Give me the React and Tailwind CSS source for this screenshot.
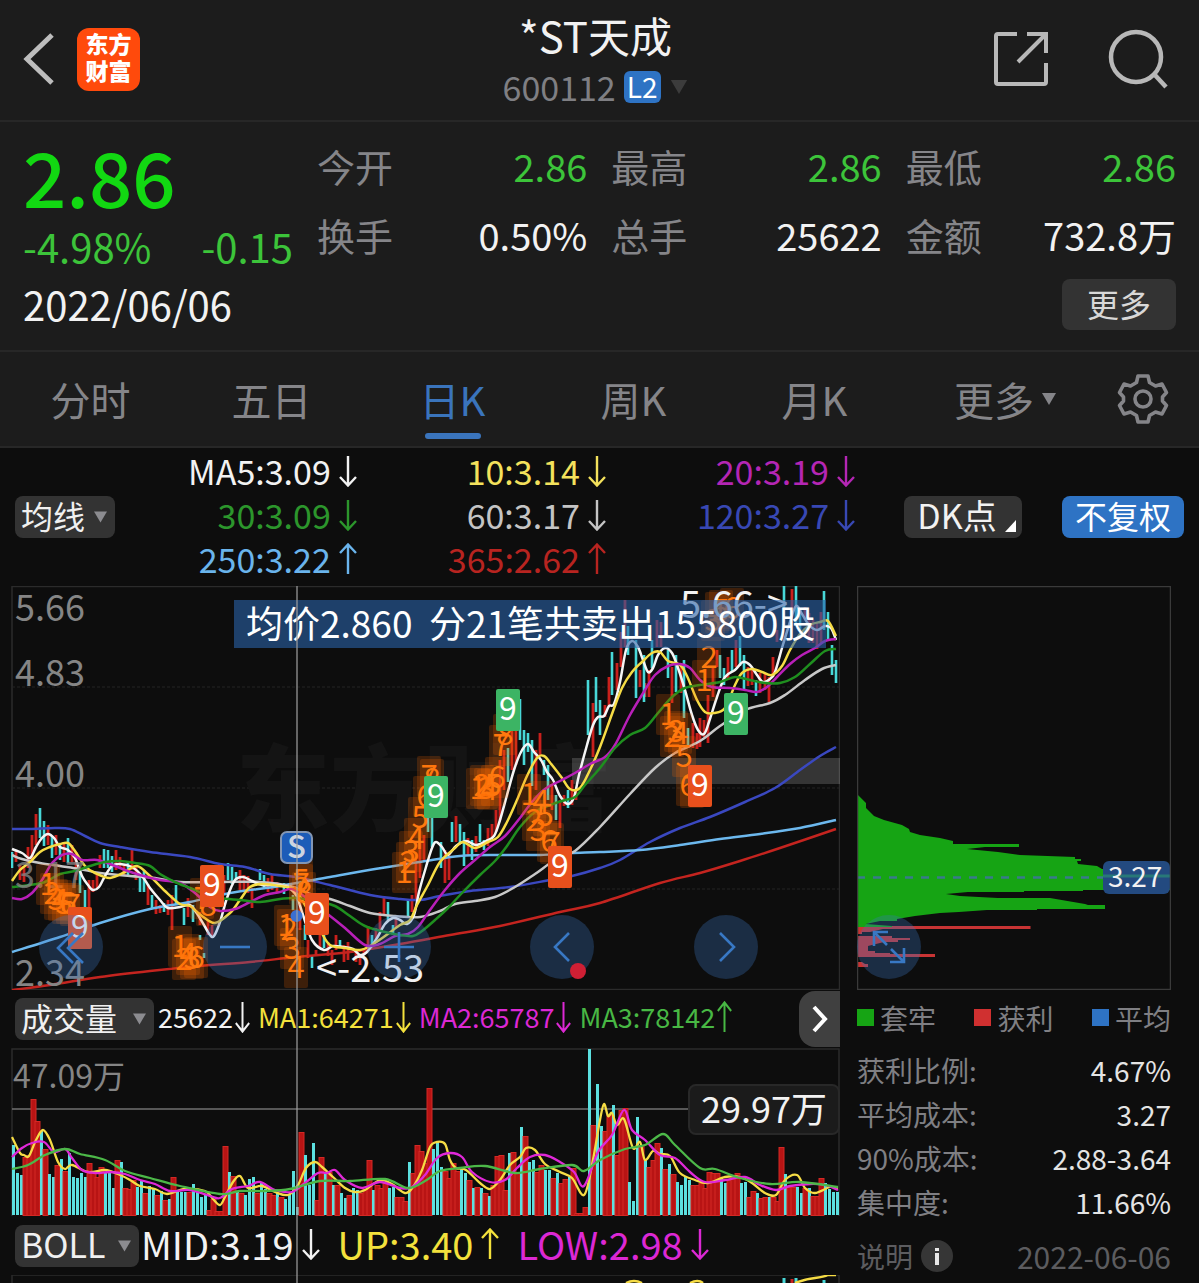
import React, { useState } from 'react';

const quotes = [
  { label: '今开', value: '2.86', up: false },
  { label: '最高', value: '2.86', up: false },
  { label: '最低', value: '2.86', up: false },
  { label: '换手', value: '0.50%' },
  { label: '总手', value: '25622' },
  { label: '金额', value: '732.8万' }
];

const tabs = ['分时', '五日', '日K', '周K', '月K'];

const averages = [
  { text: 'MA5:3.09', dir: 'down', color: 'text-[#f2f2f2]' },
  { text: '10:3.14', dir: 'down', color: 'text-[#f3e15c]' },
  { text: '20:3.19', dir: 'down', color: 'text-[#b426b4]' },
  { text: '30:3.09', dir: 'down', color: 'text-[#2c962c]' },
  { text: '60:3.17', dir: 'down', color: 'text-[#c4c4c4]' },
  { text: '120:3.27', dir: 'down', color: 'text-[#3848b4]' },
  { text: '250:3.22', dir: 'up', color: 'text-[#6ab4ec]' },
  { text: '365:2.62', dir: 'up', color: 'text-[#b82420]' }
];

const costs = [
  { label: '获利比例:', value: '4.67%' },
  { label: '平均成本:', value: '3.27' },
  { label: '90%成本:', value: '2.88-3.64' },
  { label: '集中度:', value: '11.66%' }
];

// "x,y x,y ..." point lists
const priceLines = [
  { color: '#3a48c0', points: '12,829 30,829 55,828 70,829 85,836 100,843 120,847 150,852 190,857 220,864 245,867 270,874 296,877 330,885 370,895 400,899 420,900 440,896 470,891 510,887 550,880 572,876 600,868 620,860 650,842 680,828 710,817 745,802 775,788 800,770 820,756 836,747' },
  { color: '#6cb8ee', points: '12,952 60,937 100,923 150,909 190,902 230,893 280,886 330,877 375,869 420,862 460,856 500,855 540,855 570,853 600,852 640,850 680,845 720,839 760,834 800,828 836,820' },
  { color: '#c4241f', points: '12,990 50,985 100,977 150,971 200,966 250,962 296,957 350,952 400,944 450,935 500,926 560,912 600,903 660,883 700,873 740,861 780,848 836,829' },
  { color: '#c8c8c8', points: '12,855 22,859 40,863 60,866 80,869 100,873 130,876 155,878 180,882 220,882 260,882 290,886 310,894 330,899 350,906 370,913 395,916 420,917 440,911 455,904 475,901 495,897 515,887 535,874 555,860 575,851 600,827 630,794 655,768 675,753 700,741 720,726 745,710 770,703 785,695 805,680 822,669 836,665' },
  { color: '#f5f5f5', points: '12,849 22,853 30,858 36,847 42,838 48,834 54,838 60,847 68,850 75,858 82,876 88,885 93,890 99,887 105,876 112,866 120,864 132,867 142,876 150,888 160,900 168,908 180,907 190,905 196,912 204,925 210,935 214,936 220,922 227,898 235,880 243,877 252,881 262,885 275,885 287,887 296,895 303,915 312,940 324,950 333,946 343,947 353,949 360,955 367,952 377,938 385,924 393,918 400,920 407,924 414,915 419,892 426,867 432,848 436,842 442,847 448,855 456,846 466,841 476,845 486,841 494,836 500,820 507,795 514,770 521,752 528,744 534,752 541,760 547,772 553,780 560,796 568,804 574,797 579,775 587,745 593,725 598,717 604,716 609,706 614,704 620,682 626,650 632,641 638,647 643,660 648,672 653,668 658,655 665,648 672,653 678,668 685,690 692,715 698,730 704,734 709,722 717,697 725,677 735,670 743,662 750,665 757,675 763,682 770,679 775,672 782,648 790,622 796,606 802,614 809,625 817,630 825,626 831,628 836,640' },
  { color: '#f6dc45', points: '12,881 20,870 30,862 40,852 50,847 60,844 68,843 75,851 85,866 95,873 110,878 125,872 137,866 150,876 165,891 180,904 190,906 202,916 215,923 230,913 240,900 250,887 262,884 280,886 295,890 305,905 320,930 330,945 345,948 360,950 370,946 385,936 400,925 410,920 417,905 428,885 440,862 455,848 463,842 475,848 488,842 498,837 507,822 517,800 527,776 537,758 544,756 552,765 562,778 570,789 580,788 590,770 600,747 612,714 622,688 632,672 642,662 652,653 660,652 668,661 680,665 687,676 697,700 705,712 714,713 725,708 735,685 742,673 752,669 762,672 772,675 782,666 790,650 800,634 810,625 820,622 828,621 836,636' },
  { color: '#b81fb8', points: '12,898 22,899 32,893 42,880 52,863 62,855 72,854 82,860 97,860 110,864 125,870 140,875 160,880 180,883 195,893 210,907 220,911 235,909 250,902 265,895 280,892 292,889 305,897 325,912 345,928 365,945 380,944 395,936 408,934 418,927 430,910 445,890 460,873 475,860 490,847 505,836 520,818 532,802 545,789 560,781 575,773 590,764 605,757 615,745 630,715 645,690 655,675 668,666 680,664 690,668 700,680 712,687 730,688 745,690 757,692 767,687 777,677 790,664 802,655 815,648 825,641 836,639' },
  { color: '#1f8f1f', points: '12,887 30,885 45,882 60,874 75,871 90,866 105,862 120,861 135,863 150,866 160,874 175,882 190,888 205,894 220,898 240,900 260,902 280,899 296,898 320,902 335,906 350,916 365,926 385,932 400,935 413,936 422,931 435,920 448,908 462,893 480,875 495,861 507,846 520,827 535,812 550,805 565,800 575,797 585,785 600,768 615,748 630,735 645,728 658,713 672,697 685,688 700,685 720,682 735,677 750,680 765,683 780,683 795,677 810,664 825,651 836,649' }
];

// "x,high,low ..." wicks
const fallWicks = '12,852,868 40,808,838 44,821,846 52,836,858 60,845,860 68,838,863 80,868,893 85,890,908 104,849,868 108,850,868 112,856,872 128,862,876 140,876,892 144,870,892 152,895,909 164,903,912 176,885,905 184,908,925 193,905,922 200,935,940 204,953,958 228,863,880 232,867,884 236,872,880 260,869,880 264,875,887 284,883,894 293,895,910 305,925,940 312,955,968 324,935,948 340,940,948 372,935,948 388,902,920 393,925,935 408,900,916 428,812,832 432,818,847 441,842,868 452,822,842 460,824,843 464,832,866 472,840,860 480,824,842 484,840,850 508,748,782 520,699,740 524,730,765 528,733,752 532,740,786 544,760,775 548,765,800 556,795,820 568,790,808 588,680,735 596,677,712 600,700,735 612,652,695 628,626,655 636,640,698 644,655,702 652,640,668 668,650,678 676,655,692 684,660,718 688,728,745 720,655,678 724,668,685 732,650,672 740,636,666 744,655,690 756,680,696 784,586,625 796,586,625 800,610,630 824,591,630 828,612,640 832,645,675 836,660,683';
const riseWicks = '16,850,862 20,865,880 24,866,882 28,847,868 32,835,860 36,814,845 48,825,845 56,835,855 64,842,862 72,845,862 76,852,880 89,880,912 93,880,892 97,872,888 100,855,868 116,850,870 120,857,868 124,865,875 132,850,870 136,865,880 148,884,905 156,900,914 160,905,913 168,900,915 172,895,930 188,898,917 200,912,925 208,920,935 212,925,938 220,890,905 224,875,895 240,870,890 244,875,890 248,876,893 252,888,908 268,878,892 272,874,890 277,882,893 300,900,930 308,940,958 316,950,956 320,930,948 328,942,956 332,950,965 336,935,950 344,945,962 348,942,960 356,950,962 360,955,965 364,948,955 368,926,945 376,928,940 380,912,930 384,898,915 396,915,928 412,895,912 416,860,900 420,842,878 424,835,862 445,850,883 449,852,880 456,816,842 468,838,855 476,836,852 488,828,846 492,824,838 496,810,832 500,760,820 504,750,790 512,730,770 516,705,765 536,750,790 540,733,755 552,785,810 560,800,828 564,795,806 572,780,805 576,790,800 593,703,757 605,705,717 609,677,707 617,663,690 621,632,667 625,600,647 640,670,687 645,683,697 649,670,697 657,620,647 661,622,647 672,667,703 681,663,693 693,723,748 697,733,749 700,718,747 704,720,737 708,695,743 713,667,697 717,650,667 728,657,680 736,640,667 748,667,686 752,670,685 760,673,693 765,673,690 769,677,702 773,657,677 777,630,642 792,589,617 805,607,620 809,613,643 813,620,643 817,623,649 821,612,643';

// r = rising (red), c = falling (cyan), followed by bar height
const volumeBars = 'c70 c42 c40 r58 r60 r116 r94 c84 r66 c41 c38 r50 c56 r44 c62 c38 c37 c42 c38 r52 r44 r38 r48 c42 c42 c27 r55 c53 r27 r26 r35 c28 c35 r22 c29 c27 r20 c24 r15 c16 r38 c24 c23 c23 r23 c31 c23 c18 c21 r5 r16 r4 r4 r69 c43 r39 c23 r22 c20 c36 c38 r22 c32 c26 r22 r20 c22 r18 c16 c20 c44 c8 r83 c60 c30 c72 r15 r58 c42 r43 c30 r30 c22 c17 r20 c27 c25 r22 r26 r55 c25 r30 r27 r32 c27 c28 r18 r18 r14 c53 r42 r70 r64 r52 r127 c66 c72 c48 r44 r37 r52 r44 c46 c42 r35 c27 r28 c27 r22 c19 r30 r59 r60 r25 c62 r63 r42 c88 r79 c53 c55 r43 r50 c45 c45 r37 c42 r32 r36 c38 r47 r2 r2 r8 c166 r90 c131 c89 r84 r100 c110 r60 r105 r107 c33 c14 c98 r70 c56 r48 r55 r72 c67 r46 c51 r41 c33 c30 c39 c35 r30 r30 r32 r27 r43 r42 r42 c37 c32 r35 r37 r42 c32 c33 r18 r24 c22 r17 r18 c18 r18 r14 r68 c41 r28 r28 c28 c22 r27 c27 r19 r19 r37 c32 c26 c23 c23';

const volumeLines = [
  { color: '#f6dc45', points: '12,1137 20,1153 24,1155 29,1156 36,1140 43,1130 50,1140 58,1162 65,1169 72,1165 88,1172 105,1170 118,1174 130,1180 140,1186 155,1189 167,1194 185,1189 205,1191 213,1199 220,1205 225,1197 233,1182 240,1176 248,1188 262,1186 275,1192 288,1195 298,1185 306,1168 315,1162 322,1167 333,1177 345,1188 355,1192 365,1190 380,1180 392,1184 405,1193 413,1187 422,1170 430,1147 437,1142 445,1144 450,1160 456,1168 466,1170 480,1183 490,1189 500,1180 510,1165 520,1157 526,1148 535,1150 545,1164 560,1172 572,1178 584,1195 592,1165 600,1120 604,1104 608,1116 612,1113 617,1125 624,1119 633,1148 640,1142 645,1160 653,1151 660,1154 670,1156 680,1173 695,1180 708,1183 725,1177 740,1177 752,1183 765,1193 776,1195 785,1180 797,1175 805,1188 815,1193 830,1187 838,1188' },
  { color: '#e028d8', points: '12,1157 22,1148 32,1143 44,1142 54,1152 65,1149 72,1158 82,1170 95,1173 110,1172 125,1174 140,1180 155,1184 170,1191 190,1190 210,1196 220,1198 232,1189 248,1186 260,1182 275,1190 292,1192 305,1183 318,1173 327,1173 335,1170 345,1180 362,1188 380,1182 400,1188 412,1187 425,1175 437,1158 450,1153 462,1157 472,1172 490,1182 505,1180 517,1168 530,1157 545,1155 560,1162 574,1172 584,1186 598,1152 612,1135 624,1110 632,1130 645,1140 660,1155 675,1158 690,1172 705,1182 725,1180 745,1177 760,1185 776,1190 790,1186 810,1184 825,1185 838,1190' },
  { color: '#4cb848', points: '12,1169 28,1165 45,1155 65,1149 80,1154 105,1160 125,1171 150,1178 180,1186 220,1194 240,1191 265,1191 290,1189 320,1181 350,1181 385,1179 408,1188 425,1181 440,1171 460,1168 485,1166 515,1173 540,1169 572,1165 584,1171 600,1160 625,1149 645,1145 663,1134 675,1145 700,1168 715,1169 740,1178 770,1184 800,1182 838,1187' }
];

// nine-turn counts: x, y, count
const counts = [
  [48, 884, 1], [52, 893, 2], [56, 899, 3], [60, 900, 4], [64, 903, 5], [68, 903, 6], [72, 905, 7],
  [180, 946, 1], [184, 959, 2], [188, 954, 4], [192, 958, 3], [196, 957, 6], [202, 898, 7], [208, 905, 8],
  [286, 925, 1], [289, 929, 2], [292, 948, 3], [296, 967, 4], [301, 880, 5], [301, 884, 7], [304, 892, 8],
  [404, 872, 1], [408, 862, 2], [411, 851, 3], [416, 838, 4], [420, 817, 5], [425, 796, 6], [429, 776, 7], [432, 779, 8],
  [478, 788, 1], [482, 785, 2], [486, 788, 3], [489, 789, 4], [493, 785, 5], [497, 777, 6], [501, 745, 7], [505, 734, 8],
  [529, 794, 1], [534, 820, 2], [538, 830, 3], [541, 801, 4], [545, 815, 5], [549, 841, 6], [552, 843, 7],
  [668, 714, 1], [672, 736, 2], [676, 731, 3], [680, 733, 4], [684, 756, 5], [688, 785, 6], [692, 787, 7],
  [704, 680, 1], [709, 657, 2], [713, 620, 3], [717, 612, 4], [721, 610, 5], [732, 608, 6]
];

const nines = [
  [80, 928, '#e8501c'], [212, 886, '#e8501c'], [317, 914, '#e8501c'], [560, 867, '#e8501c'],
  [700, 786, '#e8501c'], [436, 797, '#3cb464'], [508, 710, '#3cb464'], [736, 714, '#3cb464']
];

// Catmull-Rom through the points
const smooth = (str) => {
  const p = str.split(' ').map((s) => s.split(',').map(Number));
  let d = `M${p[0][0]} ${p[0][1]}`;
  for (let i = 0; i < p.length - 1; i++) {
    const a = p[i - 1] || p[i];
    const b = p[i];
    const c = p[i + 1];
    const e = p[i + 2] || c;
    d += `C${b[0] + (c[0] - a[0]) / 6} ${b[1] + (c[1] - a[1]) / 6} ${c[0] - (e[0] - b[0]) / 6} ${c[1] - (e[1] - b[1]) / 6} ${c[0]} ${c[1]}`;
  }
  return d;
};

const wickPath = (str) =>
  str.split(' ').map((s) => {
    const [x, hi, lo] = s.split(',');
    return `M${x} ${hi}V${lo}`;
  }).join('');

const Arrow = ({ dir, className = 'w-[18px]' }) => (
  <svg viewBox="0 0 18 32" className={`h-8 shrink-0 ${className}`} preserveAspectRatio="none" fill="none" stroke="currentColor" strokeWidth="2.4">
    {dir === 'down' ? <path d="M9 1V30M1 22L9 30.500L17 22" /> : <path d="M9 31V2M1 10L9 1.500L17 10" />}
  </svg>
);

const Triangle = ({ className }) => (
  <svg viewBox="0 0 14 12" className={className} fill="currentColor">
    <path d="M0 0H14L7 12Z" />
  </svg>
);

const Dropdown = ({ label, options, className }) => (
  <div className={`relative h-[42px] flex items-center shrink-0 rounded-lg bg-[#333] ${className}`}>
    <select aria-label={label} className="w-full h-14 shrink-0 appearance-none bg-transparent pl-[6px] pb-1 text-[#f0f0f0] outline-none">
      {options.map((o) => <option key={o}>{o}</option>)}
    </select>
    <Triangle className="absolute right-2 top-[15px] w-[13px] h-3 text-[#8c8c90] pointer-events-none" />
  </div>
);

const Header = () => (
  <header className="h-[122px] flex items-center justify-between border-b-2 border-[#272727] px-[23px]">
    <div className="flex items-center gap-[22px] flex-1 pb-[2px]">
      <button aria-label="返回">
        <svg viewBox="0 0 32 52" className="w-8 h-13" fill="none" stroke="#bdbdbd" strokeWidth="5">
          <path d="M29 2L4 26L29 50" />
        </svg>
      </button>
      <div className="w-[63px] h-[63px] rounded-xl bg-[#ff4a0c] pb-1 text-white font-black text-[23px] leading-[27px] flex flex-col items-center justify-center">
        <span>东方</span>
        <span>财富</span>
      </div>
    </div>
    <div className="flex flex-col items-center pt-[2px]">
      <h1 className="text-[42px] leading-[52px] text-[#f2f2f2]">*ST天成</h1>
      <div className="flex items-center gap-2 text-[34px] leading-[52px] text-[#7f7f83]">
        600112
        <span className="rounded-md bg-[#2e73c4] px-[3px] h-8 text-[28px] leading-[30px] text-white">L2</span>
        <Triangle className="w-5 h-[14px] text-[#3c3c3c]" />
      </div>
    </div>
    <div className="flex flex-1 items-center justify-end gap-[59px] pr-2 pb-[2px]">
      <button aria-label="分享">
        <svg viewBox="0 0 56 56" className="w-14 h-14" fill="none" stroke="#b8b8b8" strokeWidth="4">
          <path d="M24 3H5Q3 3 3 5V51Q3 53 5 53H51Q53 53 53 51V32" />
          <path d="M34 3H53V22M53 3L25 31" />
        </svg>
      </button>
      <button aria-label="搜索">
        <svg viewBox="0 0 60 60" className="w-15 h-15" fill="none" stroke="#b8b8b8" strokeWidth="4.500">
          <circle cx="28" cy="28" r="25" />
          <path d="M46 45L58 58" />
        </svg>
      </button>
    </div>
  </header>
);

const Quote = () => (
  <section className="h-[230px] flex gap-6 border-b-2 border-[#272727] px-[23px] pt-[9px]">
    <div className="w-[270px] shrink-0">
      <p className="text-[76px] leading-[88px] text-[#12d812] font-[450]">2.86</p>
      <p className="flex justify-between text-[40px] leading-[54px] text-[#3cc43a]">
        <span>-4.98%</span>
        <span>-0.15</span>
      </p>
      <p className="text-[40px] leading-[62px] text-[#f2f2f2]">2022/06/06</p>
    </div>
    <div className="flex-1">
      <dl className="grid grid-cols-3 gap-x-6 text-[38px] leading-[69px]">
        {quotes.map((q) => (
          <div key={q.label} className="flex justify-between">
            <dt className="text-[#858589]">{q.label}</dt>
            <dd className={q.up === false ? 'text-[#3cc43a]' : 'text-[#f2f2f2]'}>{q.value}</dd>
          </div>
        ))}
      </dl>
      <div className="flex justify-end pt-[10px]">
        <button className="w-[114px] h-[51px] rounded-lg bg-[#333] pb-1 text-[32px] leading-[46px] text-[#d8d8d8]">更多</button>
      </div>
    </div>
  </section>
);

const Tabs = () => {
  const [active, setActive] = useState('日K');
  return (
    <nav className="h-24 flex items-center border-b-2 border-[#272727] pr-[30px] text-[40px] text-[#858589]">
      {tabs.map((t) => (
        <button key={t} onClick={() => setActive(t)} className={`relative flex-1 h-full ${active === t ? 'text-[#3a74bc]' : ''}`}>
          {t}
          {active === t && <span className="absolute bottom-[7px] left-1/2 -translate-x-1/2 w-14 h-[6px] rounded-full bg-[#3a74bc]" />}
        </button>
      ))}
      <button className="flex w-[200px] mr-3 h-full items-center justify-center gap-2">
        更多
        <Triangle className="w-[14px] h-3" />
      </button>
      <button aria-label="设置" className="w-[52px]">
        <svg viewBox="0 0 52 52" className="w-13 h-13" fill="none" stroke="#858589" strokeWidth="3.600" strokeLinejoin="round">
          <path d="M21 3H31L32.500 9.500L38.500 13L45 11L49.500 19.500L45.500 24V28L49.500 32.500L45 41L38.500 39L32.500 42.500L31 49H21L19.500 42.500L13.500 39L7 41L2.500 32.500L6.500 28V24L2.500 19.500L7 11L13.500 13L19.500 9.500Z" />
          <circle cx="26" cy="26" r="8" />
        </svg>
      </button>
    </nav>
  );
};

const Averages = () => (
  <section className="h-[138px] flex items-center px-[15px]">
    <Dropdown label="主图指标" options={['均线', 'BOLL']} className="w-[100px] text-[32px]" />
    <div className="flex-1 mr-[49px] pb-1 grid grid-cols-[33fr_34fr_34fr] text-[34px] leading-11">
      {averages.map((a) => (
        <div key={a.text} className={`flex items-center justify-end gap-2 ${a.color}`}>
          {a.text}
          <Arrow dir={a.dir} />
        </div>
      ))}
    </div>
    <button className="relative w-[118px] h-[42px] rounded-lg bg-[#333] pr-3 pb-1 text-[34px] leading-9 text-[#f2f2f2]">
      DK点
      <svg viewBox="0 0 11 12" className="absolute right-[6px] bottom-[6px] w-[11px] h-3" fill="#fff"><path d="M11 0V12H0Z" /></svg>
    </button>
    <button className="ml-10 w-[122px] h-[42px] rounded-lg bg-[#2e73c4] pb-1 text-[32px] leading-9 text-white">不复权</button>
  </section>
);

const icons = [
  { label: '最左', d: 'M34 18L19 33L34 48M44 18L29 33L44 48' },
  { label: '缩小', d: 'M17 32H47' },
  { label: '放大', d: 'M17 32H47M32 17V47' },
  { label: '向左', d: 'M39 18L25 32L39 46' },
  { label: '向右', d: 'M26 18L40 32L26 46' }
];

const RoundButton = ({ label, d }) => (
  <button aria-label={label} className="block w-16 h-16 rounded-full bg-[#3a78c4]/30">
    <svg viewBox="0 0 64 64" className="w-16 h-16" fill="none" stroke="#3878c4" strokeWidth="2.600"><path d={d} /></svg>
  </button>
);

const PriceChart = () => (
  <div className="relative">
    <svg viewBox="11 586 829 404" className="block w-full">
      <rect x="12" y="586.500" width="827.500" height="403" fill="none" stroke="#2b2b2b" strokeWidth="1.500" />
      <path d="M12 687H839M12 788H839M12 889H839" stroke="#242424" strokeDasharray="3 2" />
      <text x="236" y="824" fontSize="94" fontWeight="900" fill="#141414">东方财富</text>
      <rect x="572" y="758" width="268" height="26" fill="#fff" fillOpacity="0.170" />
      <path d={wickPath(riseWicks)} stroke="#c8201c" strokeWidth="2.800" />
      <path d={wickPath(fallWicks)} stroke="#48d8d8" strokeWidth="2.600" />
      {priceLines.map((l) => <path key={l.color} d={smooth(l.points)} fill="none" stroke={l.color} strokeWidth="2.500" />)}
      <g fontSize="36" fill="#858585">
        <text x="15" y="621">5.66</text>
        <text x="15" y="686">4.83</text>
        <text x="15" y="787">4.00</text>
        <text x="15" y="888" fillOpacity="0.800">3.17</text>
      </g>
      {counts.map(([x, y, n]) => (
        <g key={`${x}-${y}`}>
          <rect x={x - 12} y={y - 20} width="24" height="41" rx="2" fill="#ff6a00" fillOpacity="0.200" />
          <text x={x} y={y + 11} fontSize="31" textAnchor="middle" fill="#ff7a10">{n}</text>
        </g>
      ))}
      {nines.map(([x, y, color]) => (
        <g key={x}>
          <rect x={x - 12} y={y - 21} width="24" height="42" rx="2" fill={color} />
          <text x={x} y={y + 10} fontSize="32" textAnchor="middle" fill="#fff">9</text>
        </g>
      ))}
      <circle cx="296.500" cy="916" r="6" fill="#3a6fd0" />
      <rect x="281" y="832" width="31" height="31" rx="6" fill="#1c5cb8" stroke="#8296b4" strokeWidth="2" />
      <text x="296.500" y="858" fontSize="31" fontWeight="500" textAnchor="middle" fill="#ccd4e0">S</text>
      <g fontSize="38" fill="#f2f2f2">
        <text x="316" y="982">&lt;-2.53</text>
        <text x="680" y="618">5.66-&gt;</text>
      </g>
      <text x="15" y="986" fontSize="36" fill="#858585">2.34</text>
    </svg>
    <p className="absolute left-[223px] top-[14px] h-12 w-[592px] pl-3 bg-[#2a62a8]/60 text-[37px] leading-[44px] text-white whitespace-pre">均价2.860  分21笔共卖出155800股</p>
    <div className="absolute left-0 right-0 bottom-[11px] flex justify-between pl-[28px] pr-[82px]">
      {icons.map((i) => <RoundButton key={i.label} {...i} />)}
    </div>
    <span className="absolute left-[559px] bottom-[11px] w-4 h-4 rounded-full bg-[#cf1f34]" />
  </div>
);

const VolumeChart = () => (
  <div className="relative">
    <svg viewBox="11 1048 829 168" className="block w-full">
      <path d="M12 1216V1049H839V1216" fill="none" stroke="#2b2b2b" strokeWidth="1.500" />
      <path d="M12 1109H700" stroke="#707070" strokeWidth="1.500" />
      <text x="13" y="1088" fontSize="32" fill="#858585">47.09万</text>
      {volumeBars.split(' ').map((b, i) => {
        const h = Number(b.slice(1));
        const x = 13.5 + i * 4;
        return b[0] === 'r'
          ? <rect key={i} x={x - 2.5} y={1215.5 - h} width="5" height={h} fill="#b81414" stroke="#d42824" strokeWidth="1" />
          : <rect key={i} x={x - 1.5} y={1215 - h} width="3" height={h} fill="#5ce0e0" />;
      })}
      {volumeLines.map((l) => <path key={l.color} d={smooth(l.points)} fill="none" stroke={l.color} strokeWidth="2.300" />)}
    </svg>
    <span className="absolute right-0 top-9 h-[51px] w-[152px] rounded-lg border-2 border-[#282828] bg-[#1b1b1b] text-center text-[36px] leading-[42px] text-[#f2f2f2]">29.97万</span>
  </div>
);

const Charts = () => (
  <div className="relative flex-1 min-w-0 pl-[11px]">
    <PriceChart />
    <div className="h-[58px] flex items-center pl-1">
      <Dropdown label="副图指标一" options={['成交量', '成交额']} className="w-[139px] text-[32px]" />
      <div className="flex flex-1 items-center gap-2 pl-1 pb-1 text-[27px]">
        <span className="flex items-center gap-[2px] text-[#f2f2f2]">25622<Arrow dir="down" className="w-[15px]" /></span>
        <span className="flex items-center gap-[2px] text-[#f3e13c]">MA1:64271<Arrow dir="down" className="w-[15px]" /></span>
        <span className="flex items-center gap-[2px] text-[#dc28d4]">MA2:65787<Arrow dir="down" className="w-[15px]" /></span>
        <span className="flex items-center gap-[2px] text-[#48b844]">MA3:78142<Arrow dir="up" className="w-[15px]" /></span>
      </div>
      <button aria-label="更多指标" className="w-[41px] h-14 rounded-l-2xl bg-[#404040] flex items-center justify-center">
        <svg viewBox="0 0 16 28" className="w-4 h-7" fill="none" stroke="#fff" strokeWidth="4"><path d="M2 2L13 14L2 26" /></svg>
      </button>
    </div>
    <VolumeChart />
    <div className="h-[59px] flex items-center pl-1">
      <Dropdown label="副图指标二" options={['BOLL', 'MACD', 'KDJ']} className="w-[124px] text-[34px]" />
      <div className="flex items-center gap-[18px] pl-[2px] pb-1 text-[38px] leading-[52px]">
        <span className="flex items-center gap-2 text-[#f2f2f2]">MID:3.19<Arrow dir="down" /></span>
        <span className="flex items-center gap-2 text-[#f3e13c]">UP:3.40<Arrow dir="up" /></span>
        <span className="flex items-center gap-2 text-[#dc28d4]">LOW:2.98<Arrow dir="down" /></span>
      </div>
    </div>
    <svg viewBox="11 1275 829 8" className="block w-full" fill="none">
      <path d="M12 1283V1275H839V1283" stroke="#2b2b2b" strokeWidth="1.500" />
      <path d="M784 1278V1283M796 1278V1283M824 1280V1283" stroke="#48d8d8" strokeWidth="3" />
      <path d="M792 1279V1283" stroke="#c8201c" strokeWidth="3" />
      <path d="M626 1283Q634 1279 642 1283M690 1283Q698 1279 703 1283M795 1283Q806 1279 815 1278T828 1275H836" stroke="#f6dc45" strokeWidth="2.500" />
    </svg>
    <div className="absolute left-[296px] top-0 bottom-0 w-[2px] bg-[#a0a0a0]/60" />
  </div>
);

const CostPanel = () => (
  <aside className="w-[359px] shrink-0 pl-[17px] pr-[28px] text-[28px] text-[#7f7f83]">
    <div className="relative">
      <svg viewBox="857 586 314 404" className="block w-full">
        <path d="M857 794L866 803V808L874 816L884 820L902 825L909 829L910 832L920 835L940 838L953 841V844H1019V847H985L967 849L998 852L1020 855L1075 857V859H1081V861H1077L1078 864L1097 866L1102 869H1170V890H1083V891H1024V892H968L946 894L960 896L998 898H1050L1085 904L1088 905H1105V909H1037V910H987L959 912L940 913L915 916L897 919V921L880 921L866 924L892 926V928H857Z" fill="#16a414" />
        <path d="M892 926H1030.500V929H857V927H892Z" fill="#c83434" />
        <path d="M857 929H883L870 932H862V934H857ZM857 936H892V938H910V940H898V942H884L868 946V951H875V953H890V954H935V957H857ZM857 962H862L865 964H868V967H857Z" fill="#c83434" />
        <path d="M857 877.500H1104" stroke="#3a7a8c" strokeWidth="2.500" strokeDasharray="8 8" />
        <rect x="1103" y="861" width="67" height="33" rx="6" fill="#234a80" />
        <path d="M1103 876H1170" stroke="#287878" strokeWidth="3" />
        <text x="1108" y="887" fontSize="28" fill="#f2f2f2">3.27</text>
        <rect x="857.500" y="586.500" width="313" height="403" fill="none" stroke="#3a3a3a" strokeWidth="1.500" />
      </svg>
      <div className="absolute left-0 bottom-[11px]">
        <RoundButton label="展开" d="M30 30L18 18M17 31V17H31M34 34L46 46M47 33V47H33" />
      </div>
    </div>
    <div className="h-[58px] flex items-center justify-between pb-[3px]">
      <span className="flex items-center gap-[6px]"><i className="w-[17px] h-[17px] bg-[#16a414]" />套牢</span>
      <span className="flex items-center gap-[6px]"><i className="w-[17px] h-[17px] bg-[#d03030]" />获利</span>
      <span className="flex items-center gap-[6px]"><i className="w-[17px] h-[17px] bg-[#2e73c4]" />平均</span>
    </div>
    <dl className="leading-11">
      {costs.map((c) => (
        <div key={c.label} className="flex justify-between">
          <dt>{c.label}</dt>
          <dd className="text-[#e4e4e4]">{c.value}</dd>
        </div>
      ))}
    </dl>
    <div className="flex items-center justify-between pt-[10px] leading-11 text-[#5c5c5f]">
      <span className="flex items-center gap-2">
        说明
        <svg viewBox="0 0 32 32" className="w-8 h-8">
          <circle cx="16" cy="16" r="16" fill="#363636" />
          <path d="M16 13V25M16 8V11" stroke="#e8e8e8" strokeWidth="4" />
        </svg>
      </span>
      <time className="text-[30px]">2022-06-06</time>
    </div>
  </aside>
);

export default function App() {
  return (
    <div className="bg-[#0d0d0d] font-['Noto_Sans_CJK_SC',sans-serif] overflow-hidden">
      <div className="bg-[#1c1c1c]">
        <Header />
        <Quote />
        <Tabs />
      </div>
      <Averages />
      <main className="flex">
        <Charts />
        <CostPanel />
      </main>
    </div>
  );
}
